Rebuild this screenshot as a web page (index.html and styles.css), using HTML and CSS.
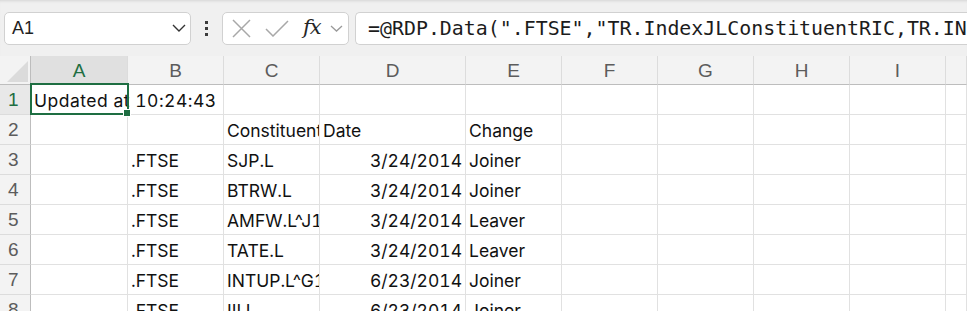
FILE: index.html
```
<!DOCTYPE html>
<html lang="en">
<head>
    <meta charset="UTF-8">
    <meta name="viewport" content="width=device-width, initial-scale=1.0">
    <link rel="stylesheet" href="styles.css">
    <title>Book1 - Excel</title>
</head>
<body>
    <div id="toolbar">
        <div id="nameBox">
            <span class="nameText">A1</span>
            <svg class="chev" width="14" height="8" viewBox="0 0 14 8"><path d="M1 1l6 6 6-6" fill="none" stroke="#333" stroke-width="1.4"/></svg>
        </div>
        <div id="dots">
            <span></span><span></span><span></span>
        </div>
        <div id="fxBox">
            <svg width="19" height="19" viewBox="0 0 19 19"><path d="M1 1l17 17M18 1L1 18" fill="none" stroke="#a8a8a8" stroke-width="1.5"/></svg>
            <svg width="24" height="17" viewBox="0 0 24 17"><path d="M1 9l7 7L23 1" fill="none" stroke="#a8a8a8" stroke-width="1.5"/></svg>
            <span class="fx">fx</span>
            <svg class="chevSmall" width="13" height="7" viewBox="0 0 13 7"><path d="M1 1l5.5 5 5.5-5" fill="none" stroke="#9a9a9a" stroke-width="1.3"/></svg>
        </div>
        <div id="formula">=@RDP.Data(".FTSE","TR.IndexJLConstituentRIC,TR.INDEXJLCONSTITUENTCHANGEDATE,TR.INDEXJLCONSTITUENTCHANGE")</div>
    </div>

    <div id="sheetWrap">
        <div id="sheet">
            <div class="hdr corner">
                <svg width="21" height="21" viewBox="0 0 21 21"><path d="M21 0v21H0z" fill="#dbdbdb"/></svg>
            </div>
            <div class="hdr col sel">A</div>
            <div class="hdr col">B</div>
            <div class="hdr col">C</div>
            <div class="hdr col">D</div>
            <div class="hdr col">E</div>
            <div class="hdr col">F</div>
            <div class="hdr col">G</div>
            <div class="hdr col">H</div>
            <div class="hdr col">I</div>
            <div class="hdr col"></div>

            <div class="hdr row sel">1</div>
            <div class="cell over">Updated at 10:24:43</div>
            <div class="cell"></div><div class="cell"></div><div class="cell"></div><div class="cell"></div>
            <div class="cell"></div><div class="cell"></div><div class="cell"></div><div class="cell"></div><div class="cell"></div>

            <div class="hdr row">2</div>
            <div class="cell"></div><div class="cell"></div>
            <div class="cell">Constituent RIC</div>
            <div class="cell">Date</div>
            <div class="cell">Change</div>
            <div class="cell"></div><div class="cell"></div><div class="cell"></div><div class="cell"></div><div class="cell"></div>

            <div class="hdr row">3</div>
            <div class="cell"></div><div class="cell">.FTSE</div><div class="cell">SJP.L</div>
            <div class="cell num">3/24/2014</div><div class="cell">Joiner</div>
            <div class="cell"></div><div class="cell"></div><div class="cell"></div><div class="cell"></div><div class="cell"></div>

            <div class="hdr row">4</div>
            <div class="cell"></div><div class="cell">.FTSE</div><div class="cell">BTRW.L</div>
            <div class="cell num">3/24/2014</div><div class="cell">Joiner</div>
            <div class="cell"></div><div class="cell"></div><div class="cell"></div><div class="cell"></div><div class="cell"></div>

            <div class="hdr row">5</div>
            <div class="cell"></div><div class="cell">.FTSE</div><div class="cell">AMFW.L^J14</div>
            <div class="cell num">3/24/2014</div><div class="cell">Leaver</div>
            <div class="cell"></div><div class="cell"></div><div class="cell"></div><div class="cell"></div><div class="cell"></div>

            <div class="hdr row">6</div>
            <div class="cell"></div><div class="cell">.FTSE</div><div class="cell">TATE.L</div>
            <div class="cell num">3/24/2014</div><div class="cell">Leaver</div>
            <div class="cell"></div><div class="cell"></div><div class="cell"></div><div class="cell"></div><div class="cell"></div>

            <div class="hdr row">7</div>
            <div class="cell"></div><div class="cell">.FTSE</div><div class="cell">INTUP.L^G14</div>
            <div class="cell num">6/23/2014</div><div class="cell">Joiner</div>
            <div class="cell"></div><div class="cell"></div><div class="cell"></div><div class="cell"></div><div class="cell"></div>

            <div class="hdr row">8</div>
            <div class="cell"></div><div class="cell">.FTSE</div><div class="cell">III.L</div>
            <div class="cell num">6/23/2014</div><div class="cell">Joiner</div>
            <div class="cell"></div><div class="cell"></div><div class="cell"></div><div class="cell"></div><div class="cell"></div>
        </div>

        <!-- active cell A1 -->
        <div id="selBox"><span class="handle"></span></div>
    </div>
</body>
</html>
```

FILE: styles.css
```
body{
    margin: 0;
    padding: 0;
    width: 967px;
    height: 311px;
    overflow: hidden;
    background: #ffffff;
    font-family: "Liberation Sans", Arial, sans-serif;
}

#toolbar{
    display: flex;
    align-items: center;
    height: 56px;
    padding: 0 0 0 4px;
    box-sizing: border-box;
    background-color: #f0f0f0;
    box-shadow: inset 0 3px 3px -2px #d4d4d4;
    white-space: nowrap;
}

#nameBox{
    display: flex;
    align-items: center;
    justify-content: space-between;
    width: 187px;
    height: 33px;
    box-sizing: border-box;
    padding: 0 4px 0 7px;
    background: #fff;
    border: 1px solid #d1d1d1;
    border-radius: 5px;
}

.nameText{
    font-size: 18px;
    color: #1f1f1f;
}

#dots{
    display: flex;
    flex-direction: column;
    gap: 3px;
    width: 31px;
    align-items: center;
}
#dots span{
    width: 3px;
    height: 3px;
    background: #3b3b3b;
}

#fxBox{
    display: flex;
    align-items: center;
    width: 127px;
    height: 33px;
    box-sizing: border-box;
    padding: 0 0 0 9px;
    background: #fff;
    border: 1px solid #d1d1d1;
    border-radius: 5px;
}
#fxBox svg:nth-child(2){
    margin-left: 14px;
}
.fx{
    margin-left: 14px;
    font-family: "DejaVu Serif", "Liberation Serif", serif;
    font-style: italic;
    font-size: 21px;
    color: #262626;
    letter-spacing: -1px;
    position: relative;
    top: -1px;
}
.chevSmall{
    margin-left: 9px;
}

#formula{
    flex: 1;
    margin-left: 6px;
    height: 33px;
    box-sizing: border-box;
    padding: 0 0 0 12px;
    background: #fff;
    border: 1px solid #d1d1d1;
    border-right: none;
    border-radius: 5px 0 0 5px;
    font-family: "DejaVu Sans Mono", monospace;
    font-size: 19.9px;
    line-height: 31px;
    color: #1c1c1c;
    overflow: hidden;
}

#sheetWrap{
    position: relative;
}

#sheet{
    display: grid;
    grid-template-columns: 31px 97px 96px 96px 146px 96px 96px 96px 96px 96px 1fr;
    grid-template-rows: 29px;
    grid-auto-rows: 30px;
    font-family: "Inter", "Liberation Sans", sans-serif;
    font-size: 17.5px;
    font-variant-numeric: tabular-nums;
    color: #111;
}

.hdr{
    background-color: #f3f3f3;
    color: #5c5c5c;
    box-sizing: border-box;
    font-family: "Liberation Sans", Arial, sans-serif;
    font-size: 19px;
}

.corner{
    display: flex;
    align-items: flex-end;
    justify-content: flex-end;
    padding: 0 2px 2px 0;
    border-right: 1px solid #bdbdbd;
    border-bottom: 1px solid #bdbdbd;
}

.col{
    text-align: center;
    line-height: 29px;
    border-right: 1px solid #dcdcdc;
    border-bottom: 1px solid #bdbdbd;
}

.row{
    padding-left: 8px;
    line-height: 30px;
    border-right: 1px solid #bdbdbd;
    border-bottom: 1px solid #dcdcdc;
}

.col.sel{
    background-color: #e0e0e0;
    color: #1e6e42;
}
.row.sel{
    background-color: #e8e8e8;
    color: #1e6e42;
}

.cell{
    box-sizing: border-box;
    padding: 0 3px;
    line-height: 31px;
    white-space: nowrap;
    overflow: hidden;
    border-right: 1px solid #e1e1e1;
    border-bottom: 1px solid #e1e1e1;
}

.cell.over{
    overflow: visible;
    position: relative;
    z-index: 1;
    letter-spacing: 0.5px;
}

.num{
    text-align: right;
}

#selBox{
    position: absolute;
    left: 30px;
    top: 27px;
    width: 99px;
    height: 32px;
    box-sizing: border-box;
    border: 2px solid #1e6e42;
    z-index: 2;
}

.handle{
    position: absolute;
    right: -3px;
    bottom: -3px;
    width: 6px;
    height: 6px;
    background: #1e6e42;
    outline: 1px solid #fff;
}
```
